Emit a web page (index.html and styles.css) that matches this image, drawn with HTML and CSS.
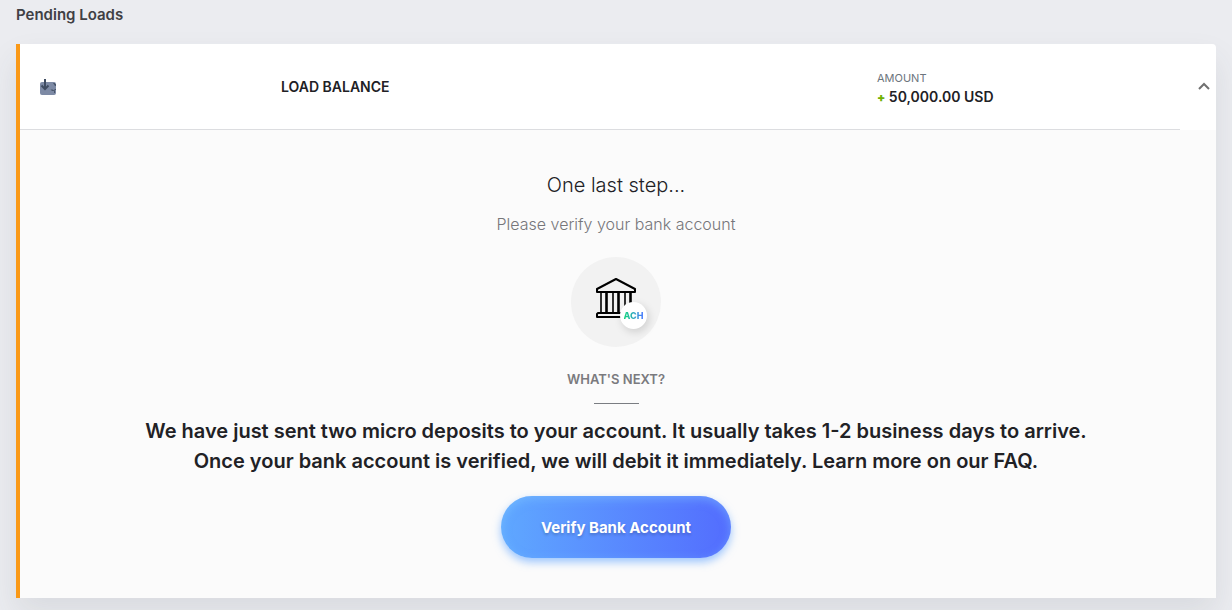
FILE: index.html
```html
<!DOCTYPE html>
<html lang="en">
<head>
    <meta charset="UTF-8">
    <meta name="viewport" content="width=device-width, initial-scale=1.0">
    <title>Pending Loads</title>
    <link rel="stylesheet" href="styles.css">
</head>
<body>

    <main class="page">
        <h1 class="page-title">Pending Loads</h1>

        <section class="load-card">
            <header class="load-header">
                <div class="load-summary">
                    <svg class="load-icon" width="16" height="16" viewBox="0 0 16 16" aria-hidden="true">
                        <rect x="0" y="3" width="16" height="13" rx="2" fill="#7d8aa5"/>
                        <path d="M13 4h2v1h1v2h-1zM10.5 10.5h2l2 1V10H16v1h-1v3h-1v-2h-2z" fill="#49566b"/>
                        <path d="M5 0v10M1.5 6.500l3.500 3.500 3.500-3.500" fill="none" stroke="#3f4c61" stroke-width="2"/>
                    </svg>
                    <h2 class="load-name">LOAD BALANCE</h2>
                    <div class="load-amount">
                        <span class="amount-label">AMOUNT</span>
                        <span class="amount-value"><span class="plus">+</span> 50,000.00 USD</span>
                    </div>
                </div>
                <button class="toggle" type="button" aria-label="Collapse" aria-expanded="true">
                    <svg width="12" height="8" viewBox="0 0 12 8" aria-hidden="true">
                        <path d="M1 7l5-5 5 5" fill="none" stroke="#707070" stroke-width="2"/>
                    </svg>
                </button>
            </header>

            <div class="load-body">
                <h3 class="step-title">One last step...</h3>
                <p class="step-text">Please verify your bank account</p>

                <div class="bank">
                    <svg width="42" height="42" viewBox="0 0 42 42" fill="none" stroke="#000" stroke-width="2" stroke-linejoin="round" aria-hidden="true">
                        <path d="M2 15v-3L21 2l19 10v3z"/>
                        <path d="M6 16v19M11 16v19M12 16v19M18 16v19M23 16v19M24 16v19M30 16v19M35 16v19M36 16v19" stroke-width="1.6"/>
                        <path d="M5 36h32M3 36h37v4H2v-3z"/>
                    </svg>
                    <span class="ach-badge"><span class="ach-text">ACH</span></span>
                </div>

                <h4 class="next-title">WHAT'S NEXT?</h4>
                <p class="next-text">We have just sent two micro deposits to your account. It usually takes 1-2 business days to arrive. Once your bank account is verified, we will debit it immediately. Learn more on our FAQ.</p>
                <button class="verify-btn" type="button">Verify Bank Account</button>
            </div>
        </section>
    </main>

</body>
</html>
```
FILE: styles.css
```css
* {
    box-sizing: border-box;
}

body {
    margin: 0;
    background: #ebecf0;
    color: #212125;
    font-family: Inter, "Liberation Sans", sans-serif;
}

h1, h2, h3, h4, p {
    margin: 0;
}

.page {
    padding: 4px 16px 12px;
}

.page-title {
    margin-bottom: 18px;
    color: #404044;
    font-size: 15px;
    font-weight: 600;
    line-height: 22px;
}

.load-card {
    border-radius: 4px 4px 0 0;
    box-shadow: 0 16px 32px rgba(60, 64, 80, 0.1);
}

/* Header row */
.load-header {
    display: flex;
    background: #fff;
    border-left: 4px solid #fa9917;
    border-radius: 0 4px 0 0;
}

.load-summary {
    display: grid;
    flex: 1;
    grid-template-columns: 241fr 596fr 303fr;
    align-items: center;
    height: 86px;
    padding-left: 20px;
    border-bottom: 1px solid #dcdde0;
}

.load-name {
    font-size: 14px;
    font-weight: 600;
    line-height: 20px;
}

.load-amount {
    display: flex;
    flex-direction: column;
    padding-top: 4px;
}

.amount-label {
    color: #6c757d;
    font-size: 11px;
    line-height: 18px;
}

.amount-value {
    font-size: 14px;
    font-weight: 600;
    line-height: 20px;
}

.plus {
    color: #6fb104;
    font-size: 12px;
    font-weight: 900;
}

.toggle {
    width: 36px;
    padding: 0 0 3px 12px;
    background: none;
    border: none;
    cursor: pointer;
}

/* Expanded content */
.load-body {
    display: flex;
    flex-direction: column;
    align-items: center;
    padding: 40px 104px 40px 100px;
    background: #fbfbfb;
    border-left: 4px solid #fa9917;
    text-align: center;
}

.step-title {
    margin-bottom: 12px;
    font-size: 20px;
    font-weight: 300;
    line-height: 30px;
}

.step-text {
    margin-bottom: 21px;
    color: #76767a;
    font-size: 16px;
    font-weight: 300;
    line-height: 24px;
}

.bank {
    position: relative;
    display: flex;
    justify-content: center;
    width: 90px;
    height: 90px;
    margin-bottom: 22px;
    padding-top: 20px;
    background: #f2f2f2;
    border-radius: 50%;
}

.ach-badge {
    position: absolute;
    right: 14px;
    bottom: 18px;
    width: 27px;
    height: 27px;
    background: #fff;
    border-radius: 50%;
    box-shadow: 2px 3px 8px rgba(0, 0, 0, 0.15);
    font-size: 9px;
    font-weight: 800;
    line-height: 27px;
}

.ach-text {
    background: linear-gradient(90deg, #12d67c, #4a7bff);
    background-clip: text;
    -webkit-background-clip: text;
    color: transparent;
}

.next-title {
    color: #7a7a7e;
    font-size: 13px;
    font-weight: 600;
    line-height: 20px;
}

.next-title::after {
    content: "";
    display: block;
    width: 45px;
    height: 1px;
    margin: 14px auto 12px;
    background: #7a7d82;
}

.next-text {
    max-width: 980px;
    margin-bottom: 20px;
    font-size: 20px;
    font-weight: 600;
    line-height: 30px;
}

.verify-btn {
    height: 62px;
    padding: 0 40px;
    background: linear-gradient(90deg, #5fa8ff, #536dfe);
    border: none;
    border-radius: 31px;
    box-shadow: 0 4px 8px rgba(90, 160, 255, 0.6), inset 0 3px 10px rgba(130, 200, 255, 0.5);
    color: #fff;
    cursor: pointer;
    font-family: inherit;
    font-size: 15px;
    font-weight: 700;
    text-shadow: 0 2px 3px rgba(0, 0, 0, 0.2);
}
```
